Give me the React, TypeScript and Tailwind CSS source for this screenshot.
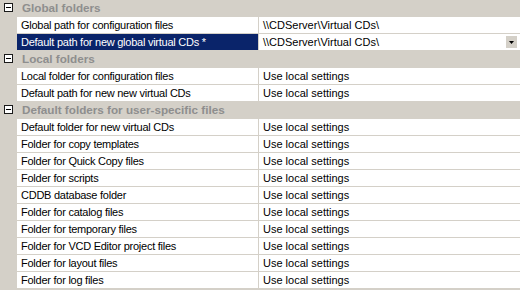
import React from "react";

type Row =
  | { kind: "header"; label: string }
  | { kind: "item"; label: string; value: string; selected?: boolean; dropdown?: boolean };

const rows: Row[] = [
  { kind: "header", label: "Global folders" },
  { kind: "item", label: "Global path for configuration files", value: "\\\\CDServer\\Virtual CDs\\" },
  { kind: "item", label: "Default path for new global virtual CDs *", value: "\\\\CDServer\\Virtual CDs\\", selected: true, dropdown: true },
  { kind: "header", label: "Local folders" },
  { kind: "item", label: "Local folder for configuration files", value: "Use local settings" },
  { kind: "item", label: "Default path for new new virtual CDs", value: "Use local settings" },
  { kind: "header", label: "Default folders for user-specific files" },
  { kind: "item", label: "Default folder for new virtual CDs", value: "Use local settings" },
  { kind: "item", label: "Folder for copy templates", value: "Use local settings" },
  { kind: "item", label: "Folder for Quick Copy files", value: "Use local settings" },
  { kind: "item", label: "Folder for scripts", value: "Use local settings" },
  { kind: "item", label: "CDDB database folder", value: "Use local settings" },
  { kind: "item", label: "Folder for catalog files", value: "Use local settings" },
  { kind: "item", label: "Folder for temporary files", value: "Use local settings" },
  { kind: "item", label: "Folder for VCD Editor project files", value: "Use local settings" },
  { kind: "item", label: "Folder for layout files", value: "Use local settings" },
  { kind: "item", label: "Folder for log files", value: "Use local settings" },
];

function MinusBox() {
  return (
    <svg width="9" height="9" viewBox="0 0 9 9" className="block">
      <rect x="0.5" y="0.5" width="8" height="8" fill="#ffffff" stroke="#1a1a1a" />
      <rect x="2" y="4" width="5" height="1" fill="#000000" />
    </svg>
  );
}

export default function App() {
  return (
    <div
      className="w-[520px] h-[290px] bg-[#d4d0c8] overflow-hidden text-[11px] leading-none"
      style={{ fontFamily: '"Liberation Sans", Arial, sans-serif' }}
    >
      {rows.map((r, i) =>
        r.kind === "header" ? (
          <div key={i} className="flex h-[17px] items-start">
            <div className="w-[17px] h-[16px] flex items-start pl-[4px] pt-[3px]">
              <MinusBox />
            </div>
            <div className="h-[16px] flex items-center pl-[5px] font-bold text-[11.7px] text-[#8e8e8e]">{r.label}</div>
          </div>
        ) : (
          <div key={i} className="flex h-[17px]">
            <div className="w-[17px] shrink-0" />
            <div className="flex flex-1 border-b border-[#d4d0c8]">
              <div
                className={
                  "w-[242px] h-[16px] flex items-center pl-[4px] whitespace-nowrap tracking-[-0.25px] border-r border-[#d4d0c8] " +
                  (r.selected ? "bg-[#0a246a] text-white" : "bg-white text-black")
                }
              >
                {r.label}
              </div>
              <div className="flex-1 h-[16px] bg-white flex items-center pl-[4px] pr-[2px] text-black whitespace-nowrap">
                <span className="flex-1">{r.value}</span>
                {r.dropdown && (
                  <div className="w-[11px] h-[12px] bg-[#d4d0c8] flex items-center justify-center mr-[1px]">
                    <svg width="5" height="3" viewBox="0 0 5 3">
                      <path d="M0 0H5L2.5 3Z" fill="#000" />
                    </svg>
                  </div>
                )}
              </div>
            </div>
          </div>
        )
      )}
    </div>
  );
}
